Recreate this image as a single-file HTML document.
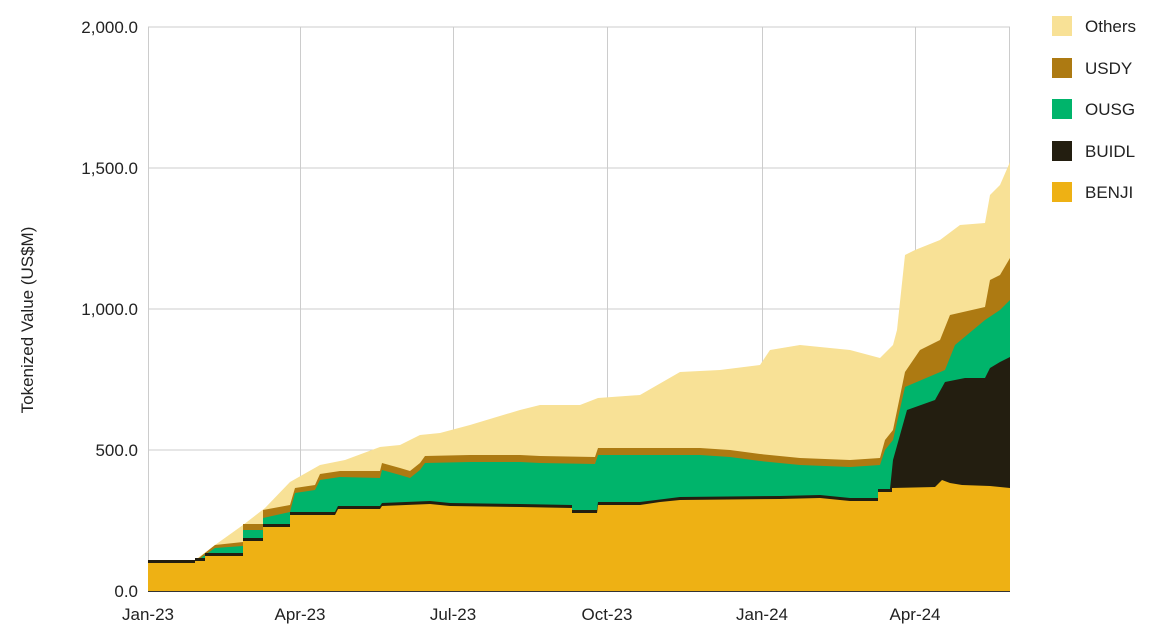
<!DOCTYPE html>
<html><head><meta charset="utf-8"><style>
body{margin:0;background:#fff;}
svg{display:block;font-family:"Liberation Sans",Arial,sans-serif;}
</style></head><body>
<svg width="1160" height="636" viewBox="0 0 1160 636">
<g stroke="#cccccc" stroke-width="1">
<line x1="148" y1="27" x2="1010" y2="27"/>
<line x1="148" y1="168" x2="1010" y2="168"/>
<line x1="148" y1="309" x2="1010" y2="309"/>
<line x1="148" y1="450" x2="1010" y2="450"/>
<line x1="148.5" y1="27" x2="148.5" y2="591"/>
<line x1="300.5" y1="27" x2="300.5" y2="591"/>
<line x1="453.5" y1="27" x2="453.5" y2="591"/>
<line x1="607.5" y1="27" x2="607.5" y2="591"/>
<line x1="762.5" y1="27" x2="762.5" y2="591"/>
<line x1="915.5" y1="27" x2="915.5" y2="591"/>
<line x1="1009.5" y1="27" x2="1009.5" y2="591"/>
</g>
<!-- Others -->
<polygon fill="#f8e196" points="148,591 148,560 195,560 215,545 243,525 265,508 290,482 320,465 345,460 380,447 400,445 420,435 440,433 470,425 520,410 540,405 580,405 598,398 640,395 680,372 720,370 760,365 770,350 800,345 850,350 880,358 893,345 897,330 905,255 915,250 940,240 960,225 985,223 990,195 1000,185 1010,162 1010,591"/>
<!-- USDY -->
<polygon fill="#ad7a12" points="148,591 148,562 195,561 205,553 215,545 243,542 243,524 263,524 263,510 290,505 295,488 315,485 320,474 340,471 380,471 382,463 400,468 410,471 420,463 425,456 470,455 520,455 540,456 595,457 598,448 650,448 700,448 730,450 760,454 800,458 850,460 880,458 885,440 893,430 905,372 920,350 940,340 950,315 985,307 990,280 1000,275 1010,258 1010,591"/>
<!-- OUSG -->
<polygon fill="#00b46b" points="148,591 148,563 195,562 205,555 215,548 243,546 243,530 263,530 263,518 290,512 295,493 315,490 320,480 340,477 380,478 382,470 400,475 410,478 420,470 425,463 470,462 520,462 540,463 595,464 598,455 650,455 700,455 730,457 760,461 800,465 850,467 880,465 885,450 893,440 905,387 945,370 955,345 985,320 1000,310 1010,300 1010,591"/>
<!-- BUIDL -->
<polygon fill="#231e10" points="148,591 148,560 195,560 195,558 205,558 205,553 243,553 243,538 263,538 263,524 290,524 290,512 335,512 338,506 380,506 382,503 430,501 450,503 520,504 572,505 572,510 597,510 598,502 640,502 680,497 780,496 820,495 850,498 878,498 878,489 890,489 893,460 907,410 935,400 945,382 965,378 985,378 990,368 1000,362 1010,357 1010,591"/>
<!-- BENJI -->
<polygon fill="#eeb114" points="148,591 148,563 195,563 195,561 205,561 205,556 243,556 243,541 263,541 263,527 290,527 290,515 335,515 338,509 380,509 382,506 430,504 450,506 520,507 572,508 572,513 597,513 598,505 640,505 660,502 680,500 780,499 820,498 850,501 878,501 878,492 892,492 892,488 935,487 942,480 950,483 962,485 990,486 1010,488 1010,591"/>
<line x1="148" y1="591.5" x2="1010" y2="591.5" stroke="#333" stroke-width="1"/>
<g font-size="17" fill="#222" text-anchor="end">
<text x="138" y="33">2,000.0</text>
<text x="138" y="174">1,500.0</text>
<text x="138" y="315">1,000.0</text>
<text x="138" y="456">500.0</text>
<text x="138" y="597">0.0</text>
</g>
<g font-size="17" fill="#222" text-anchor="middle">
<text x="148" y="620">Jan-23</text>
<text x="300" y="620">Apr-23</text>
<text x="453" y="620">Jul-23</text>
<text x="607" y="620">Oct-23</text>
<text x="762" y="620">Jan-24</text>
<text x="915" y="620">Apr-24</text>
</g>
<text x="0" y="0" font-size="17" fill="#222" text-anchor="middle" transform="translate(33,320) rotate(-90)">Tokenized Value (US$M)</text>
<g font-size="17" fill="#222">
<rect x="1052" y="16" width="20" height="20" fill="#f8e196"/><text x="1085" y="32">Others</text>
<rect x="1052" y="58" width="20" height="20" fill="#ad7a12"/><text x="1085" y="74">USDY</text>
<rect x="1052" y="99" width="20" height="20" fill="#00b46b"/><text x="1085" y="115">OUSG</text>
<rect x="1052" y="141" width="20" height="20" fill="#231e10"/><text x="1085" y="157">BUIDL</text>
<rect x="1052" y="182" width="20" height="20" fill="#eeb114"/><text x="1085" y="198">BENJI</text>
</g>
</svg>
</body></html>
